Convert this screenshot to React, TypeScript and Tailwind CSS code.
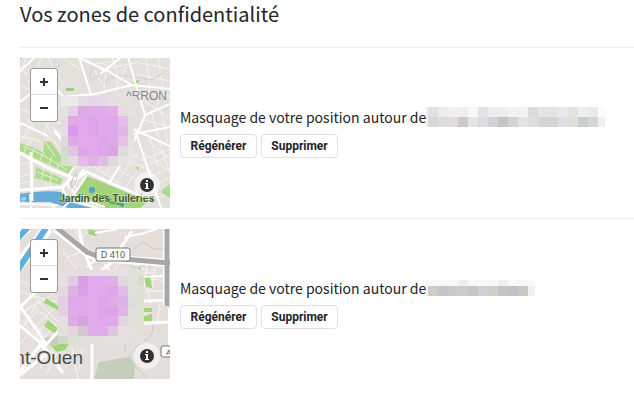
import type { ReactNode } from 'react';

type Mosaic = { xs: number[]; ys: number[]; rows: string[][] };

const mosaicParis: Mosaic = {
  xs: [41, 48, 58, 68, 78, 88, 98, 108, 114],
  ys: [38, 48, 58, 68, 78, 88, 98, 108],
  rows: [
    ['#eceae7', '#eceae8', '#e5dce5', '#e8d4e8', '#e6d8e6', '#e4dee2', '#e4e0dc', '#e4e0dc'],
    ['#e6e1df', '#e6d0e7', '#dcabe2', '#e0abe9', '#e0abe9', '#e0b0e7', '#e4dce2', '#e6e2dd'],
    ['#e4dce2', '#dfa9e5', '#e1a9ec', '#dfa5e8', '#e1a9eb', '#e0a8ea', '#e3bee8', '#e3dfdb'],
    ['#e5dce6', '#d998eb', '#e2a8ef', '#dfa4e9', '#dfaae9', '#dfa9e9', '#e0b6e6', '#e3dfe0'],
    ['#e2d8df', '#dfa8e6', '#e1abec', '#e1a9ec', '#dfa5ea', '#dfa8e9', '#e5c1e8', '#e4e2de'],
    ['#d5dccd', '#e2c4e5', '#dfa7e9', '#e1a9eb', '#dea8e8', '#dba4e5', '#e2d9df', '#e8e6e3'],
    ['#d7dfcb', '#e1dfdc', '#e3bbe6', '#dfafe8', '#e2bbe7', '#e0d7dc', '#e6e4e1', '#e8e5e2'],
  ],
};

const mosaicOuen: Mosaic = {
  xs: [38, 48, 58, 68, 78, 88, 98, 108, 118, 124],
  ys: [41, 47, 57, 67, 77, 87, 97, 107, 115],
  rows: [
    ['#e4e0dd', '#e5dfe0', '#e5dbe3', '#e7dbe6', '#e8dce7', '#e7e1e4', '#e6e2df', '#e0e0da', '#dfe2d6'],
    ['#e6e1df', '#e2cae3', '#d99fe8', '#e1abed', '#e1abed', '#dcb2e2', '#e2d6df', '#e1e1dc', '#d4ddc8'],
    ['#e4d6e2', '#dfb2e5', '#dca0eb', '#e2abef', '#dfa9eb', '#dea6e8', '#e0bbe4', '#e0e1da', '#dbe2d0'],
    ['#e3cfe3', '#dfa9e9', '#dfa8eb', '#e1abec', '#dfa7eb', '#dfabe9', '#dfb1e6', '#dfdcd9', '#dfe0d9'],
    ['#e4d0e4', '#e2abec', '#dfa8e9', '#e2acee', '#dfa7eb', '#dca3e7', '#dfb5e5', '#e1dfdb', '#dce7cd'],
    ['#e6dfe2', '#deabe5', '#d5a6dc', '#e0abeb', '#dfa8ea', '#dfa8e8', '#e1d3df', '#e2dfdb', '#dce4d0'],
    ['#e1e1dc', '#e2d5df', '#d4c5d1', '#e0afe9', '#e1ace9', '#e1c3e4', '#e6e1df', '#e4e1dc', '#e3e0db'],
    ['#cfd8ca', '#dce1d4', '#e0e0da', '#e3dfdc', '#e4dfdf', '#e5e0dd', '#e4e0dc', '#e3e0db', '#e4e1dc'],
  ],
};

function MosaicCells({ xs, ys, rows }: Mosaic) {
  return (
    <g shapeRendering="crispEdges">
      {rows.flatMap((row, r) =>
        row.map((fill, c) => (
          <rect key={`${r}-${c}`} x={xs[c]} y={ys[r]} width={xs[c + 1] - xs[c]} height={ys[r + 1] - ys[r]} fill={fill} />
        )),
      )}
    </g>
  );
}

function ParisMap() {
  return (
    <svg viewBox="0 0 150 150" className="block size-full" fontFamily="'Liberation Sans', Arial, sans-serif">
      <rect width="150" height="150" fill="#e4e0dc" />
      <g fill="none" stroke="#f5f3f1" strokeWidth="1">
        <path d="M0 12 36 30M0 28 45 45M6 0 0 15M22 0 8 25M35 10 20 48M28 0 44 28M46 2 66 16M66 0 79 12M75 13 85 31M84 6 95 20M92 0 98 18M75 6 100 2M79 12 119 4M100 24 106 8M86 12 84 34M95 34 99 19M120 5 150 11M117 16 150 23M126 0 130 27M138 0 143 29M118 35 150 38M105 35 108 48M119 40 150 60M130 30 121 46M144 32 134 53M124 62 150 69M131 54 139 80M140 51 148 84M0 51 42 66M0 68 40 49M7 60 17 74M20 54 32 77M30 60 24 79M0 84 14 64M28 78 41 91M32 69 43 78" />
        <path d="M0 78 22 84M3 96 13 79M18 102 28 80M50 110 60 108M62 115 82 96M72 119 90 99M81 122 103 91M94 128 118 95M104 131 126 103M114 136 133 110M73 108 101 126M82 101 112 120M91 92 132 114M101 89 126 104M117 90 146 111M127 82 150 101M121 102 150 91M125 108 150 98M129 119 150 110M132 130 150 119M136 140 150 135M139 83 150 115M130 79 138 110M0 106 12 105M0 119 12 115M0 126 12 123M30 124 32 136M38 126 41 138M22 117 27 130M58 144 66 150M80 150 91 141" />
      </g>
      <path d="M74 7q7 4 6 10l-9 5q-3-5 3-15M85 23q12-8 29-4l17 3 12-7" fill="none" stroke="#d2cecb" strokeWidth="1" />
      <path d="M34 4l4 1 1 4-5-1z" fill="#e9edef" stroke="#c9cfd2" />
      <path d="M46 30h8v3h-8zM114 23l5-1-1 3-5 1zM0 0h2v1H0z" fill="#9bce78" />
      <path d="M0 85l12 4 41 20-4 7-49-23zM24 83l7 1 10 14v6l-18-9zM16 109l27 12-3 6-25-7z" fill="#aedb8b" />
      <path d="M3 88l20 9 24 15M7 86l-3 9M14 90l-2 8M24 94l-4 8M32 99l-3 8M40 104l-4 9M25 84l10 14M17 114l21 8M24 111l-3 12M32 114l-2 11" fill="none" stroke="#e8efd7" strokeWidth="1" />
      <path d="M67 118 118 139 125 146 120 150H83L55 137z" fill="#a3d37b" />
      <path d="M142 132l8-6v14l-8-5zM115 109h4v4z" fill="#abdc86" />
      <path d="M0 136q24-4 41-2l8 10 23 6H48l-18-6H0z" fill="#65acd9" />
      <g fill="none" stroke="#fff" strokeLinejoin="round">
        <path strokeWidth="2" d="M59-1 72 40M55-2 88 13 112 27 150 31M112 27 75 36 43 39M108-1 116 27 125 57 150 46M125 57 111 90 89 125M116 75 141 150M113 71 150 88M108 77 150 69M0 65 28 78M-1 14 14 0M30 23 45 41M0 44 11 35M80 16 100 0" />
        <path strokeWidth="3" d="M-2 94 28 110 56 121 67 114 91 125 123 139M11 94 12 143M34 72 42 82M0 132 43 129 51 120" />
        <path strokeWidth="2" d="M54 110q-8 7-5 21M64 111q-7 8-10 20M51 131 61 145 78 150M42 129 49 144 43 150M10 136 11 150M0 146 38 147M67 117 53 138 85 149M28 145 35 150" />
      </g>
      <ellipse cx="54" cy="123" rx="2" ry="7" transform="rotate(18 54 123)" fill="none" stroke="#cac6c3" />
      <circle cx="72" cy="132" r="3" fill="#559dcc" />
      <circle cx="102" cy="147" r="2" fill="#559dcc" />
      <path d="M79 138h7l5 4M89 144l15 3" stroke="#4da276" strokeWidth="2" fill="none" />
      <text x="106" y="42" fontSize="12" fill="#8b8785">^RRON</text>
      <text x="39" y="144" fontSize="10" fontWeight="700" fontFamily="Inter, sans-serif" fill="#395c28" stroke="#dcebcd" strokeWidth="1" paintOrder="stroke">Jardin des Tuileries</text>
      <text x="1" y="144" fontSize="9" fontStyle="italic" fill="#d9efff">e</text>
      <MosaicCells {...mosaicParis} />
    </svg>
  );
}

function OuenMap() {
  return (
    <svg viewBox="0 0 150 150" className="block size-full" fontFamily="'Liberation Sans', Arial, sans-serif">
      <rect width="150" height="150" fill="#e4dfdb" />
      <g fill="none" stroke="#f7f5f3">
        <path d="M43 22 57 40M48 28 69 20M58 12 67 3M66 24 75 32M91 44 111 23M96 31 142 33M108 33 127 42M101 43 137 44M119 36 116 46M128 33 124 58M136 31 132 60M108 48 150 52M127 62 150 62M0 63 40 74M0 84 34 65M10 64 39 94M21 68 5 94M37 77 12 101M0 90 25 115M0 101 17 82M12 76 37 97M4 84 32 114M24 97 12 112M31 101 16 119M39 107 31 126M0 115 8 105M15 118 38 138M0 134 15 120M30 122 20 139M37 124 27 144M52 119 58 150M62 119 59 142M118 91 150 93M128 78 123 92M140 74 137 93M124 50 131 75M55 0 61 14M0 51 18 61" />
      </g>
      <path d="M115 20q6-10 13-4 7 7 21 2M109 34q5 7 13 3 7-4 9 2M112 107q-10 8-6 16M131 91q7 17-12 24l-10 12M104 134q14 2 23 16" fill="none" stroke="#cfcac4" />
      <path d="M69 0 78 3 76 7 68 5zM117 38l4 1-1 3zM124 47l6-1 2 13-6-1zM26 69l12 8v4L24 74zM28 91l9 8v7l-13-9 4-6zM124 87 132 85v7h-8zM124 79h8v4h-8zM31 117l19-4-5 8-8 2z" fill="#9fd676" />
      <path d="M24 109l25-5v8l-18 5-7-4zM79 133l31-5 5 7-1 15H74z" fill="#c3cfbc" />
      <path d="M-2 6 8-2M-2 37 28-1" stroke="#fff" strokeWidth="11" />
      <path d="M-2 9 9-3M-3 42 26-1" stroke="#62aedd" strokeWidth="6" />
      <g fill="none" stroke="#fff">
        <path strokeWidth="3" d="M59 0 64 23 72 41M112 2 90 35 82 41M0 78 16 63M-2 95 22 115 43 144M0 77 27 116M23 113 8 132M14 124 0 143M43 97 22 120M124 72 150 71M72 115V150M113 95 150 93M0 146 29 123" />
        <path strokeWidth="2" d="M67 38 75 31M85 35 99 55M105 8 121 5 137 0M75 4 98 0M149 79V125M112 48 150 47" />
      </g>
      <path d="M35-1 67 24 80 29 151 34M147-1V77" fill="none" stroke="#fff" strokeWidth="8" />
      <path d="M36-2 67 23 80 28 151 34M147-1V77" fill="none" stroke="#a7a7a7" strokeWidth="5" />
      <rect x="76" y="19" width="34" height="13" rx="2" fill="#fff" stroke="#777" />
      <text x="93" y="29" textAnchor="middle" fontFamily="'Noto Sans', sans-serif" fontSize="9" fill="#555">D 410</text>
      <rect x="141" y="117" width="20" height="11" rx="2" fill="#fff" stroke="#777" />
      <text x="146" y="126" fontSize="8" fill="#555">A</text>
      <text x="63" y="135" textAnchor="end" fontSize="19" fill="#4c4b4a" stroke="#e9e5e2" strokeWidth="2" paintOrder="stroke">nt-Ouen</text>
      <MosaicCells {...mosaicOuen} />
    </svg>
  );
}

function MapFrame({ name, children }: { name: string; children: ReactNode }) {
  return (
    <div role="group" aria-label={name} className="relative size-[150px] shrink-0 overflow-hidden">
      {children}
      <div className="absolute top-2.5 left-2.5 flex w-7 flex-col overflow-hidden rounded-[3px] border border-[#999] bg-white">
        <button type="button" aria-label="Zoom avant" className="flex h-[26px] items-center justify-center border-b border-[#ddd]">
          <svg viewBox="0 0 8 8" className="size-2"><path d="M0 4h8M4 0v8" stroke="#333" strokeWidth="2" /></svg>
        </button>
        <button type="button" aria-label="Zoom arrière" className="flex h-[26px] items-center justify-center">
          <svg viewBox="0 0 8 8" className="size-2"><path d="M0 4h8" stroke="#333" strokeWidth="2" /></svg>
        </button>
      </div>
      <button type="button" aria-label="Informations" className="absolute right-2.5 bottom-2.5 flex size-[26px] items-center justify-center rounded-full bg-white/50">
        <svg viewBox="0 0 14 14" className="size-3.5">
          <circle cx="7" cy="7" r="7" fill="#333" />
          <path d="M6 2h2v2H6zM5 5h3v5h1v1H5v-1h1V6H5z" fill="#fff" />
        </svg>
      </button>
    </div>
  );
}

const redactedLong = [
  ['#e3e2e0', '#ebecee', '#f0f0f0', '#f0efed', '#f7f7f7', '#e4e2e6', '#ededee', '#eeeeef', '#f2f2f3', '#f1f1f2', '#dadada', '#e4e6e5', '#e4e3df', '#e6e8ec', '#e2e3e3', '#ecedef', '#e9eaea', '#fafbfd'],
  ['#d9d8d5', '#dbdcde', '#dddbdf', '#cdc9c8', '#e3e5e9', '#dddbdf', '#d3d3d4', '#c5c3c7', '#d3d3d1', '#e3e3e7', '#dddddc', '#d3d5d9', '#d5d4cf', '#dce0e5', '#dddfd8', '#c9cdd0', '#d8d6d4', '#eeeff5'],
];

const redactedShort = [
  ['#f7f7f7', '#f8f8f8', '#f8f8f7', '#eeeeef', '#f8f8f8', '#f9f9fa', '#f8f8f8', '#f0f0f1', '#f9f9f9', '#f8f5f4', '#f8fafb'],
  ['#cfcbca', '#c2c5cb', '#cbc9c9', '#cdcbcc', '#c3c7c7', '#cfd0d5', '#d0cfca', '#c4c4c8', '#c0c2ca', '#cbc7c5', '#edf1f7'],
];

function Redacted({ rows, tall }: { rows: string[][]; tall: boolean }) {
  return (
    <span className="shrink-0 border-l-2 border-[#f1f1f1]">
      {rows.map((row, r) => (
        <span key={r} className={tall || r === 1 ? 'flex h-2.5' : 'flex h-1.5'}>
          {row.map((color, c) => (
            <span key={c} className={c === row.length - 1 ? 'w-[7px]' : 'w-2.5'} style={{ backgroundColor: color }} />
          ))}
        </span>
      ))}
    </span>
  );
}

function ZoneRow({ name, map, rows, tall }: { name: string; map: ReactNode; rows: string[][]; tall: boolean }) {
  return (
    <li className="flex items-center gap-2.5 border-t border-[#f0f0f0] py-2.5 last:pb-0">
      <MapFrame name={name}>{map}</MapFrame>
      <div>
        <p className="flex h-[18px] items-center whitespace-nowrap text-sm">
          Masquage de votre position autour de
          <Redacted rows={rows} tall={tall} />
        </p>
        <div className="mt-2 flex gap-1 font-[Roboto,sans-serif]">
          {['Régénérer', 'Supprimer'].map((label) => (
            <button key={label} type="button" className="flex h-6 w-[77px] items-center justify-center rounded-sm border border-[#dfdfe8] bg-white text-xs font-bold text-[#242428]">
              {label}
            </button>
          ))}
        </div>
      </div>
    </li>
  );
}

export default function App() {
  return (
    <main className="bg-white pl-5 font-['Noto_Sans_CJK_SC',sans-serif] text-[#242428]">
      <h2 className="pb-5 text-xl leading-[27px]">Vos zones de confidentialité</h2>
      <ul>
        <ZoneRow name="Carte du Jardin des Tuileries" map={<ParisMap />} rows={redactedLong} tall />
        <ZoneRow name="Carte de Saint-Ouen" map={<OuenMap />} rows={redactedShort} tall={false} />
      </ul>
    </main>
  );
}
